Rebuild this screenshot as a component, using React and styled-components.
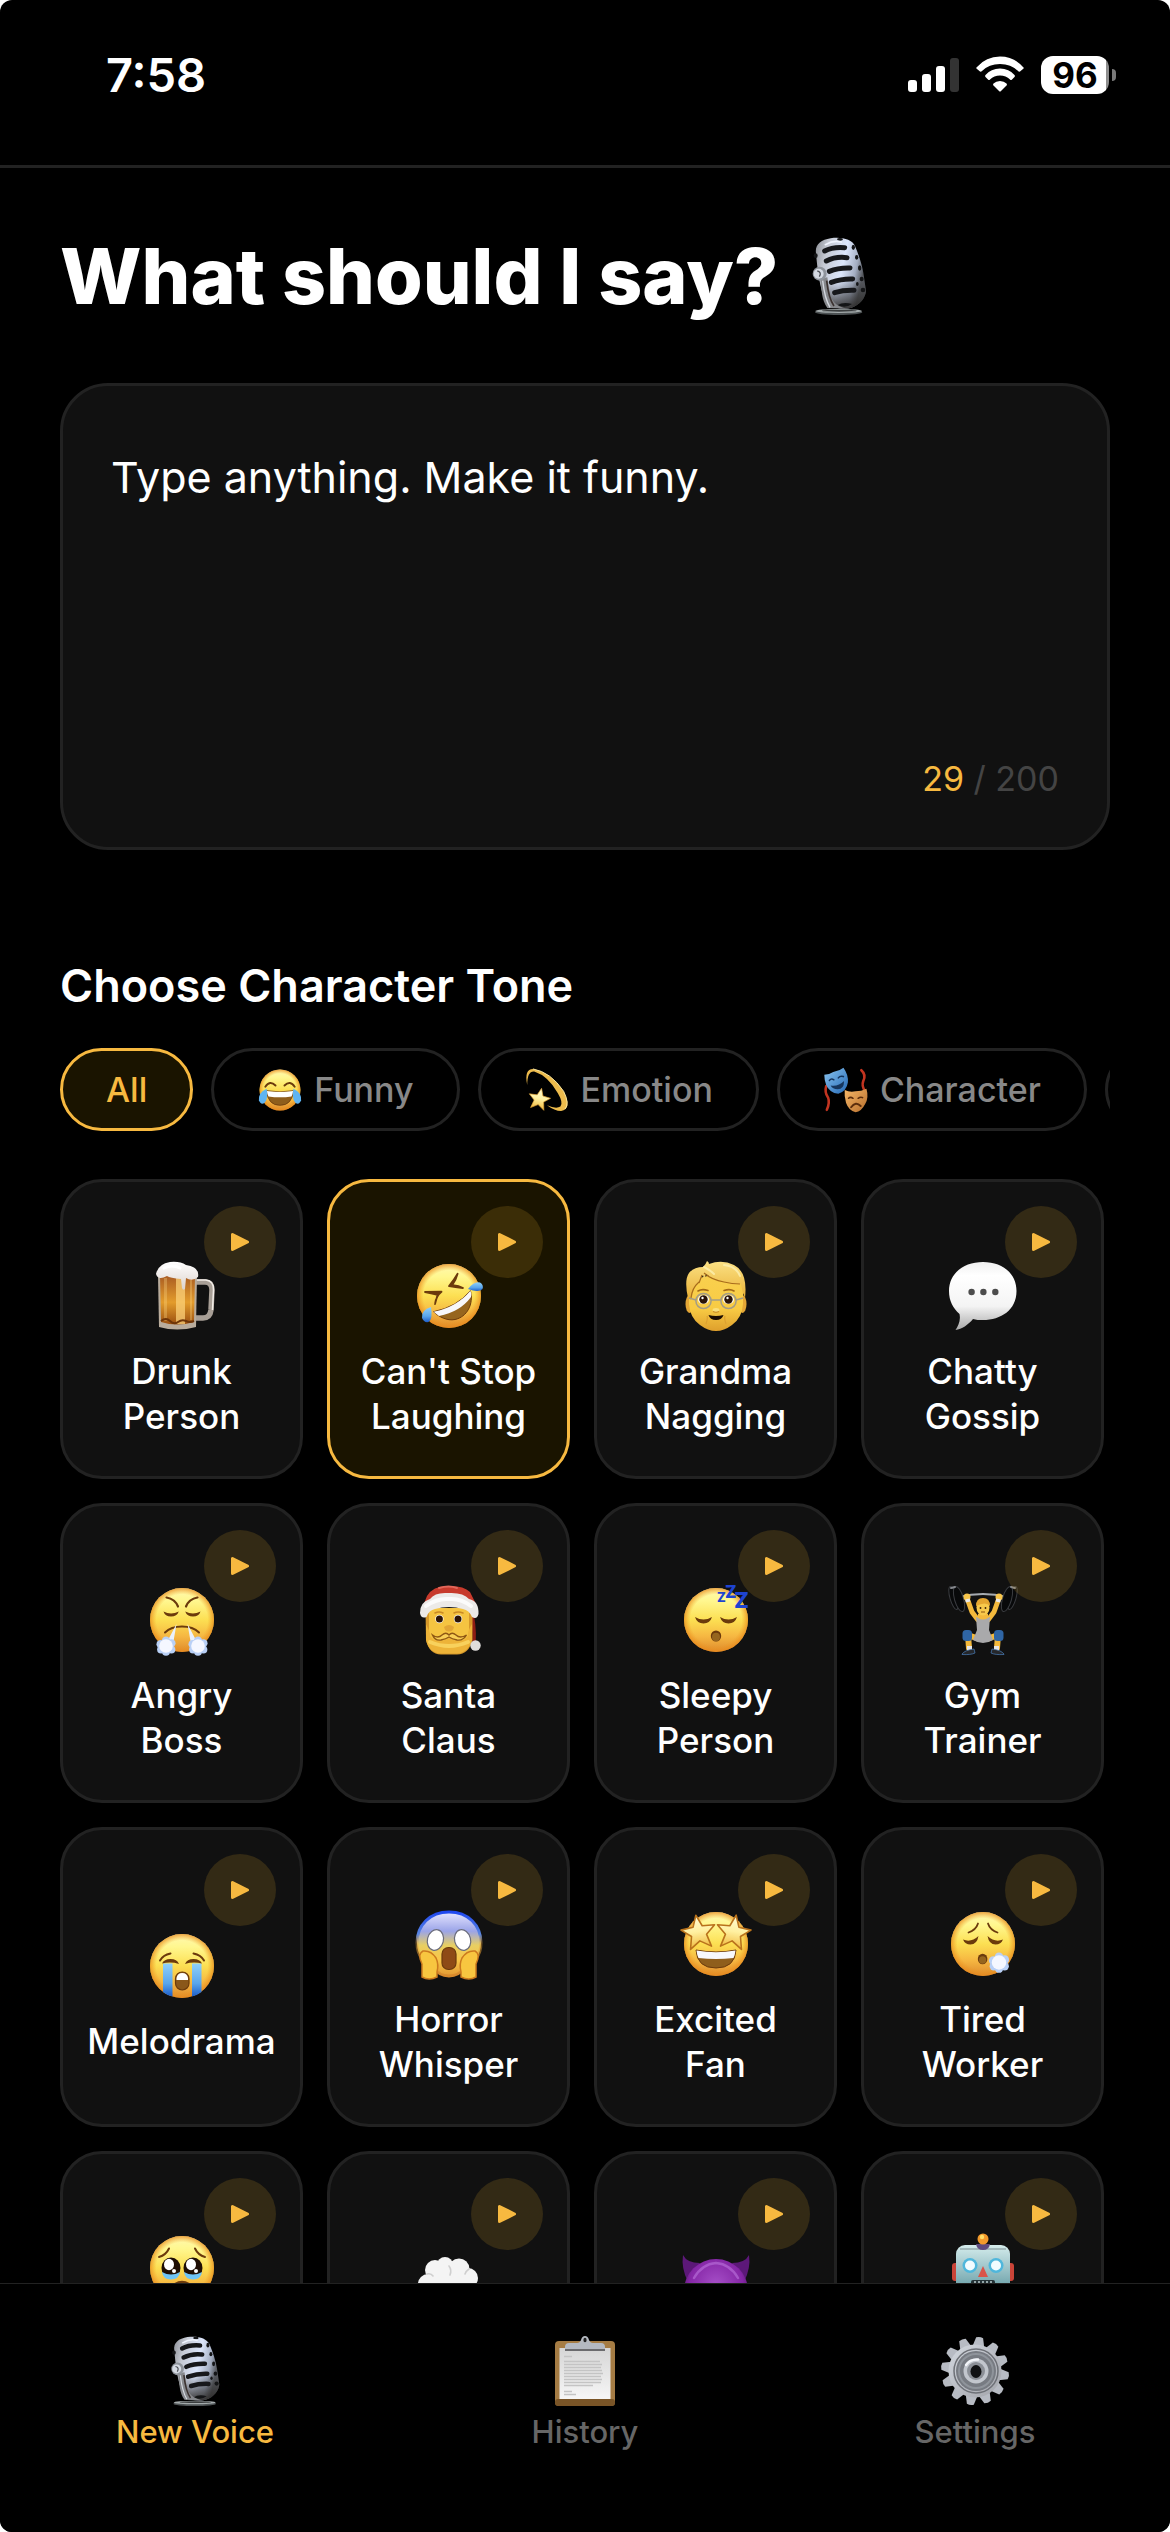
import styled from "styled-components";
import { createGlobalStyle } from "styled-components";
import React from "react";


const Global = createGlobalStyle`
*{
  box-sizing: border-box;
  font-family: 'Inter', sans-serif;
}
html{
  background: #FFFFFF;
}
body{
  margin: 0;
}
button, textarea{
  margin: 0;
  padding: 0;
  border: none;
  background: none;
  color: inherit;
}
`

const Page = styled.div`
height: 100vh;
display: flex;
flex-direction: column;
overflow: hidden;
background: #000000;
color: #FFFFFF;
border-radius: 12px;
`

const StatusBar = styled.header`
display: flex;
align-items: center;
justify-content: space-between;
padding: 45px 54px 60px 106px;
border-bottom: 3px solid #222222;
`
const Time = styled.span`
font-size: 47px;
line-height: 60px;
font-weight: 600;
`
const StatusIcons = styled.div`
display: flex;
align-items: center;
gap: 17px;
`
const Battery = styled.div`
display: flex;
align-items: center;
gap: 3px;
`
const BatteryBody = styled.span`
width: 68px;
border-radius: 12px;
background: linear-gradient(90deg, #FFFFFF 96%, #8E8E8E 96%);
color: #000000;
font-size: 35px;
line-height: 38px;
font-weight: 700;
text-align: center;
`
const BatteryTip = styled.span`
width: 4px;
height: 12px;
border-radius: 0 4px 4px 0;
background: #7A7A7A;
`

const Main = styled.main`
flex: 1;
min-height: 0;
overflow-y: auto;
padding: 60px 60px 48px;
scrollbar-width: none;
`
const Title = styled.h1`
display: flex;
align-items: center;
gap: 21px;
margin: 0 0 59px;
font-size: 77px;
line-height: 96px;
font-weight: 800;
`
const TextCard = styled.div`
display: flex;
flex-direction: column;
padding: 48px;
border: 3px solid #222222;
border-radius: 48px;
background: #111111;
`
const TextInput = styled.textarea`
display: block;
width: 100%;
height: 325px;
padding-top: 10px;
font-size: 43px;
line-height: 66px;
resize: none;
&:focus{
  outline: none;
}
`
const Counter = styled.div`
align-self: flex-end;
font-size: 34px;
line-height: 40px;
color: #444444;
`
const CounterValue = styled.span`
color: #F7B940;
`

const SectionTitle = styled.h2`
margin: 109px 0 35px;
font-size: 45px;
line-height: 54px;
font-weight: 600;
`
const Chips = styled.div`
display: flex;
gap: 18px;
margin-bottom: 48px;
overflow-x: auto;
scrollbar-width: none;
`
const Chip = styled.button`
flex: none;
display: flex;
align-items: center;
gap: 11px;
height: 83px;
padding: 0 43px;
border: 3px solid ${props => props.$active ? '#F7B940' : '#222222'};
border-radius: 42px;
background: ${props => props.$active ? '#1A1400' : '#000000'};
color: ${props => props.$active ? '#F7B940' : '#888888'};
font-size: 34px;
line-height: 45px;
font-weight: 500;
`

const Grid = styled.div`
display: grid;
grid-template-columns: repeat(4, 1fr);
gap: 24px;
padding-right: 6px;
`
const Card = styled.div`
position: relative;
height: 300px;
border: 3px solid ${props => props.$active ? '#F7B940' : '#222222'};
border-radius: 42px;
background: ${props => props.$active ? '#1A1400' : '#111111'};
`
const CardSelect = styled.button`
width: 100%;
height: 100%;
display: flex;
flex-direction: column;
align-items: center;
justify-content: center;
gap: 17px;
padding: 40px 12px 0;
border-radius: 39px;
font-size: 35px;
line-height: 45px;
font-weight: 500;
`
const CardLabel = styled.span`
white-space: pre-line;
text-align: center;
`
const PlayButton = styled.button`
position: absolute;
top: 24px;
right: 24px;
width: 72px;
height: 72px;
display: flex;
align-items: center;
justify-content: center;
border-radius: 50%;
background: rgba(247, 190, 48, 0.15);
`

const TabBar = styled.nav`
display: grid;
grid-template-columns: repeat(3, 1fr);
padding: 51px 0 81px;
border-top: 1px solid #222222;
background: #000000;
`
const Tab = styled.button`
display: flex;
flex-direction: column;
align-items: center;
gap: 6px;
color: ${props => props.$active ? '#F7B940' : '#666666'};
font-size: 31px;
line-height: 38px;
font-weight: 500;
`

const EmojiSvg = styled.svg`
flex: none;
display: block;
width: ${props => props.$size}px;
height: ${props => props.$size}px;
overflow: visible;
`
const SharedDefs = styled.svg`
position: absolute;
width: 0;
height: 0;
`


//gradients used by all the emoji;
function Defs() {
  return (
    <SharedDefs aria-hidden="true">
      <defs>
        <linearGradient id="face" x1="0" y1="0" x2="0" y2="1">
          <stop offset="0" stopColor="#FFF8B0" />
          <stop offset="0.2" stopColor="#FFF78F" />
          <stop offset="0.5" stopColor="#FCDF52" />
          <stop offset="0.75" stopColor="#F6B842" />
          <stop offset="1" stopColor="#DE8A2C" />
        </linearGradient>
        <radialGradient id="edge">
          <stop offset="0.8" stopColor="#F09A20" stopOpacity="0" />
          <stop offset="1" stopColor="#E8891C" stopOpacity="0.75" />
        </radialGradient>
        <linearGradient id="fear" x1="0" y1="0" x2="0" y2="1">
          <stop offset="0" stopColor="#E6E6FF" />
          <stop offset="0.3" stopColor="#9BA4E8" />
          <stop offset="0.52" stopColor="#E8CF62" />
          <stop offset="0.75" stopColor="#F8C548" />
          <stop offset="1" stopColor="#E39A34" />
        </linearGradient>
        <linearGradient id="fearRim" x1="0" y1="0" x2="0" y2="1">
          <stop offset="0" stopColor="#1F48F0" />
          <stop offset="0.35" stopColor="#5A86E0" />
          <stop offset="0.5" stopColor="#E9A537" stopOpacity="0.4" />
          <stop offset="1" stopColor="#D98A2C" />
        </linearGradient>
        <linearGradient id="tear" x1="0" y1="0" x2="0" y2="1">
          <stop offset="0" stopColor="#8FD0FA" />
          <stop offset="0.6" stopColor="#5AA6EC" />
          <stop offset="1" stopColor="#1D5DC8" />
        </linearGradient>
        <linearGradient id="skin" x1="0" y1="0" x2="0" y2="1">
          <stop offset="0" stopColor="#F9D04E" />
          <stop offset="0.6" stopColor="#F8CB44" />
          <stop offset="1" stopColor="#DE9F2C" />
        </linearGradient>
        <linearGradient id="hair" x1="0" y1="0" x2="0" y2="1">
          <stop offset="0" stopColor="#FBE184" />
          <stop offset="1" stopColor="#E9AF33" />
        </linearGradient>
        <linearGradient id="beer" x1="0" y1="0" x2="0" y2="1">
          <stop offset="0" stopColor="#A85A22" />
          <stop offset="0.55" stopColor="#E39C2C" />
          <stop offset="1" stopColor="#9A4F10" />
        </linearGradient>
        <linearGradient id="foam" x1="0" y1="0" x2="0" y2="1">
          <stop offset="0" stopColor="#FFFFFF" />
          <stop offset="1" stopColor="#DCD2CC" />
        </linearGradient>
        <linearGradient id="bubble" x1="0" y1="0" x2="0" y2="1">
          <stop offset="0" stopColor="#F0F0F0" />
          <stop offset="0.2" stopColor="#FFFFFF" />
          <stop offset="0.65" stopColor="#F4F4F4" />
          <stop offset="1" stopColor="#A9A9A9" />
        </linearGradient>
        <linearGradient id="starFill" x1="0" y1="0" x2="0" y2="1">
          <stop offset="0" stopColor="#FFFBD8" />
          <stop offset="0.5" stopColor="#FFF0A0" />
          <stop offset="1" stopColor="#F0B93E" />
        </linearGradient>
        <linearGradient id="steel" x1="0" y1="0" x2="1" y2="0.3">
          <stop offset="0" stopColor="#8A8D94" />
          <stop offset="0.25" stopColor="#C6CAD4" />
          <stop offset="0.6" stopColor="#DCE6FC" />
          <stop offset="0.85" stopColor="#A4AEC2" />
          <stop offset="1" stopColor="#55585E" />
        </linearGradient>
        <linearGradient id="micShade" x1="0" y1="0" x2="0" y2="1">
          <stop offset="0.6" stopColor="#2A2826" stopOpacity="0" />
          <stop offset="1" stopColor="#2A2826" stopOpacity="0.9" />
        </linearGradient>
        <linearGradient id="gearFill" x1="0" y1="0" x2="1" y2="1">
          <stop offset="0" stopColor="#D3D8DF" />
          <stop offset="1" stopColor="#A2A4AA" />
        </linearGradient>
        <linearGradient id="paper" x1="0" y1="0" x2="0" y2="1">
          <stop offset="0" stopColor="#D6D6D6" />
          <stop offset="1" stopColor="#F6F6F6" />
        </linearGradient>
        <radialGradient id="devil" cx="0.5" cy="0.4" r="0.6">
          <stop offset="0" stopColor="#A64FC8" />
          <stop offset="0.7" stopColor="#8526A6" />
          <stop offset="1" stopColor="#4A1060" />
        </radialGradient>
        <linearGradient id="robot" x1="0" y1="0" x2="0" y2="1">
          <stop offset="0" stopColor="#D5ECEC" />
          <stop offset="1" stopColor="#4F8D98" />
        </linearGradient>
        <linearGradient id="blueMask" x1="0" y1="0" x2="1" y2="1">
          <stop offset="0" stopColor="#8CC7F2" />
          <stop offset="1" stopColor="#2367B4" />
        </linearGradient>
        <linearGradient id="goldMask" x1="0" y1="0" x2="1" y2="1">
          <stop offset="0" stopColor="#F7B868" />
          <stop offset="1" stopColor="#B56D2C" />
        </linearGradient>
      </defs>
    </SharedDefs>
  )
}

const BROWN = '#6B3A0C';

function Face() {
  return (
    <>
      <circle cx="36" cy="36" r="32" fill="url(#face)" />
      <circle cx="36" cy="36" r="32" fill="url(#edge)" />
    </>
  )
}

function Lines({ d, w = 2.6, color = BROWN }) {
  return <path d={d} fill="none" stroke={color} strokeWidth={w} strokeLinecap="round" strokeLinejoin="round" />
}

function Puff({ x, y, r }) {
  return (
    <g transform={`translate(${x} ${y}) scale(${r / 10})`}>
      <g fill="#B9D0F6">
        <circle cx="-6" cy="-2" r="4.6" /><circle cx="0" cy="-6" r="4.6" /><circle cx="6" cy="-3" r="4.6" />
        <circle cx="6" cy="4" r="4.4" /><circle cx="0" cy="6.5" r="4.4" /><circle cx="-5.5" cy="4" r="4.4" />
      </g>
      <circle r="7.6" fill="#F5F7FF" />
    </g>
  )
}

const STAR = 'M0 -17 L4.6 -5.6 L17 -4.6 L7.6 3.4 L10.6 16 L0 9 L-10.6 16 L-7.6 3.4 L-17 -4.6 L-4.6 -5.6 Z';

const emojis = {
  mic: (
    <>
      <ellipse cx="132" cy="261" rx="71" ry="8" fill="#4D5254" />
      <ellipse cx="132" cy="257" rx="70" ry="6" fill="#A3AAAB" />
      <ellipse cx="134" cy="256" rx="52" ry="3" fill="#3A3D3E" />
      <path d="M64 84 C60 58 78 44 108 39 C140 34 172 42 181 62 C193 90 202 118 206 142 L214 196 C214 214 196 240 168 248 C136 254 104 246 92 228 C74 182 68 130 64 84Z" fill="url(#steel)" />
      <path d="M64 84 C60 58 78 44 108 39 C140 34 172 42 181 62 C193 90 202 118 206 142 L214 196 C214 214 196 240 168 248 C136 254 104 246 92 228 C74 182 68 130 64 84Z" fill="url(#micShade)" />
      <g fill="none" stroke="#17181B" strokeWidth="15" strokeLinecap="round">
        <path d="M90 77 Q114 64 150 67" />
        <path d="M95 107 Q122 93 157 97" />
        <path d="M104 138 Q130 127 166 128" />
        <path d="M110 171 Q140 160 174 161" />
        <path d="M120 202 Q146 194 178 195" />
      </g>
      <g fill="#141517">
        <ellipse cx="136" cy="42" rx="9" ry="4" />
        <ellipse cx="63" cy="91" rx="6" ry="7" />
        <ellipse cx="176" cy="66" rx="5" ry="8" />
        <ellipse cx="186" cy="96" rx="5" ry="7" />
        <ellipse cx="195" cy="128" rx="5" ry="8" />
        <ellipse cx="201" cy="161" rx="6" ry="7" />
        <ellipse cx="205" cy="194" rx="7" ry="7" />
        <ellipse cx="188" cy="176" rx="4" ry="6" />
        <path d="M128 240 Q146 228 172 236 Q154 250 128 240Z" />
      </g>
      <path d="M76 160 C82 196 80 222 98 248 L168 250 C124 248 108 224 104 196 L98 156Z" fill="#85878B" />
      <path d="M84 166 Q90 220 106 246" fill="none" stroke="#D5D9E0" strokeWidth="4" />
      <path d="M96 166 Q102 220 118 242" fill="none" stroke="#3B3230" strokeWidth="5" />
      <circle cx="75" cy="145" r="21" fill="#8F949C" />
      <circle cx="72" cy="145" r="15" fill="#D4D9E2" />
      <path d="M68 137 Q82 140 74 154" fill="none" stroke="#4A4D54" strokeWidth="4" />
      <path d="M92 58 Q116 44 140 50" fill="none" stroke="#F1F5FF" strokeWidth="5" strokeLinecap="round" />
    </>
  ),
  beer: (
    <>
      <path d="M50 22 H59 Q66 22 66 30 L65 50 Q64 58 57 58 H50" fill="none" stroke="#A89F96" strokeWidth="5.5" />
      <path d="M50 20 H60 Q68 21 67.500 30 L66.500 50" fill="none" stroke="#F3EEE8" strokeWidth="1.500" />
      <path d="M12 15 H51 L50 67 Q31 72 13 67Z" fill="#B9AC9C" />
      <path d="M14 15 H49 L48 62 Q31 67 15 62Z" fill="url(#beer)" />
      <path d="M30 16 H39 V64 H30Z" fill="#FBD078" opacity="0.75" />
      <path d="M18 18 H21 V61 H18Z M44 20 H46 V60 H44Z" fill="#FFDF8E" opacity="0.3" />
      <path d="M15 61 Q20 57 24 61 T32 62 T40 61 T48 61" fill="none" stroke="#6E3508" strokeWidth="2" />
      <path d="M10 14 Q12 4 24 2 Q34 1 40 5 Q54 7 52 17 Q46 22 40 18 L39 29 Q37 31 36 28 L35 19 Q24 18 21 16 Q12 21 10 14Z" fill="url(#foam)" />
      <path d="M18 8 Q26 4 34 8" fill="none" stroke="#FFFFFF" strokeWidth="3" strokeLinecap="round" />
    </>
  ),
  rofl: (
    <>
      <Face />
      <path d="M12 32 L28.500 31.700 Q23 36 22 44 L24.500 35 Q18 33 12 32Z" fill={BROWN} stroke={BROWN} strokeWidth="1.800" strokeLinejoin="round" />
      <path d="M44.600 13.700 Q41 20 36 26 Q42 27 50 28 Q44 24.500 39 25.500 Q43 20 44.600 13.700Z" fill={BROWN} stroke={BROWN} strokeWidth="1.800" strokeLinejoin="round" />
      <path d="M20.600 51.700 Q44 47 57.400 30.700 C61 44 54 57 42 59.500 C34 61 26 57 20.600 51.700Z" fill="#96651E" stroke="#6B3A0C" strokeWidth="1" />
      <path d="M20.600 51.700 Q44 47 57.400 30.700 Q59 34 58 37 Q47 52 26 56Z" fill="#F7F7FB" />
      <path d="M55 29 Q61 21 67 22.500 Q71 25 69.500 29 Q66 33 55 29Z" fill="url(#tear)" />
      <path d="M18 47 Q8 50 9 58 Q11 63 15.500 62 Q20 59 18 47Z" fill="url(#tear)" />
    </>
  ),
  grandma: (
    <>
      <ellipse cx="9.500" cy="44" rx="4" ry="9" fill="#E3A636" />
      <ellipse cx="62.500" cy="44" rx="4" ry="9" fill="#E3A636" />
      <path d="M9 24 Q36 6 63 24 V44 Q62 58 52 65 Q44 71 36 71 Q28 71 20 65 Q10 58 9 44Z" fill="url(#skin)" />
      <path d="M8 38 Q4 20 9 13 Q14 7 23 7 Q26 4 27 1 Q29 2 29 4 Q42 -1 54 5 Q68 12 65 38 Q62 32 61 24 Q52 24 46 22 Q34 20 26 14 L24 20 L23 15 L19 22 Q12 28 11 40Z" fill="url(#hair)" />
      <path d="M24 13 Q32 20 44 22 Q52 24 60 24 M22 15 L19 23 M11 38 Q12 28 19 22" fill="none" stroke="#A86C1C" strokeWidth="1.200" />
      <path d="M24 7 Q30 10 34 14 M44 5 Q56 6 60 16" fill="none" stroke="#FDF0B0" strokeWidth="2" strokeLinecap="round" opacity="0.8" />
      <Lines d="M18 31 Q22 28.500 28 30.500 M44 30.500 Q50 28.500 54 31" w={1.6} color="#A36A18" />
      <ellipse cx="23.500" cy="39.500" rx="5.500" ry="4.600" fill="#FFFFFF" />
      <ellipse cx="48.500" cy="39.500" rx="5.500" ry="4.600" fill="#FFFFFF" />
      <circle cx="23.500" cy="39.500" r="4.200" fill="#2A1408" />
      <circle cx="48.500" cy="39.500" r="4.200" fill="#2A1408" />
      <circle cx="22.500" cy="38" r="1.200" fill="#FFFFFF" />
      <circle cx="47.500" cy="38" r="1.200" fill="#FFFFFF" />
      <g fill="none" stroke="#A39C86" strokeWidth="1.500">
        <circle cx="23.500" cy="41" r="7.600" />
        <circle cx="48.500" cy="41" r="7.600" />
        <path d="M31 40 H41 M16 40 L9 38 M56 40 L63 38" />
      </g>
      <ellipse cx="36" cy="50" rx="3.500" ry="2" fill="#FBE07C" />
      <path d="M33 51.500 Q36 53 39 51.500" fill="none" stroke="#C98A25" strokeWidth="1.200" />
      <path d="M28.500 55 Q36 57 43.500 55 Q42 60 36 60 Q30 60 28.500 55Z" fill="#1C0D02" />
      <path d="M26 64 Q28 58 27 56 M46 64 Q44 58 45 56" fill="none" stroke="#DDA031" strokeWidth="1.200" />
    </>
  ),
  chat: (
    <>
      <path d="M36 2 C55 2 69.500 13 69.500 31 C69.500 50 54 60 36 60 C32 60 29 60 26 59 C21 65 15 69 8.500 70 C11 66 14 61 12.500 54 C6 48 2 41 2 31 C2 13 17 2 36 2Z" fill="url(#bubble)" />
      <circle cx="24.600" cy="32" r="3.200" fill="#4C4C4C" />
      <circle cx="36.400" cy="32" r="3.200" fill="#4C4C4C" />
      <circle cx="48.300" cy="32" r="3.200" fill="#4C4C4C" />
    </>
  ),
  angry: (
    <>
      <Face />
      <Lines d="M20.500 13.500 Q29 15 32 22.500 M51.500 13.500 Q43 15 40 22.500" w={2.2} />
      <path d="M17.500 27.500 Q25 31.500 32.800 27.500 Q31 32.500 25 32.500 Q19 32.500 17.500 27.500Z M39.200 27.500 Q47 31.500 54.500 27.500 Q53 32.500 47 32.500 Q41 32.500 39.200 27.500Z" fill={BROWN} />
      <Lines d="M19 48.500 Q25 42.500 36 42.500 Q47 42.500 53 48.500" w={2} />
      <path d="M30.500 40 L21 58 L27 60Z M41.500 40 L51 58 L45 60Z" fill="#EAF1FC" />
      <Puff x={20} y={62} r={9} />
      <Puff x={52} y={62} r={9} />
    </>
  ),
  santa: (
    <>
      <path d="M57 22 Q62 40 61 58" fill="none" stroke="#8E1D14" strokeWidth="3.500" />
      <path d="M12.500 26 H59.500 V56 Q56 70 44 70.500 H28 Q16 70 13 56Z" fill="#D6982A" />
      <path d="M16 24 H56 V50 Q54 60 36 60 Q18 60 16 50Z" fill="#F5C441" />
      <path d="M13 40 Q18 50 17 52 L21 56 Q28 57 36 52 Q44 57 51 56 L55 52 Q54 48 59 40 V56 Q55 69 44 69.500 H28 Q16 69 13 56Z" fill="#EDB338" />
      <path d="M17 58 Q36 66 55 58" fill="none" stroke="#F8D15C" strokeWidth="4" strokeLinecap="round" />
      <path d="M14 12 Q20 2 34 2 Q50 1 57 8 L64 22 L10 22Z" fill="#C73A2C" />
      <path d="M26 4 Q36 1 44 4" fill="none" stroke="#E2685B" strokeWidth="2" strokeLinecap="round" />
      <path d="M7 29 Q7 18 17 15 Q22 8 35 9 Q50 8 56 15 Q66 17 65.500 30 Q64 36 59 33 Q56 26 50 25 Q36 21 22 25 Q16 26 13.500 33 Q8 35 7 29Z" fill="#ECEAE8" />
      <path d="M13 22 Q24 14 36 15 Q48 14 58 22" fill="none" stroke="#FFFFFF" strokeWidth="4" strokeLinecap="round" opacity="0.8" />
      <circle cx="26.400" cy="35" r="4.200" fill="#FFFFFF" />
      <circle cx="45" cy="35" r="4.200" fill="#FFFFFF" />
      <circle cx="26.400" cy="35" r="3.500" fill="#2A1408" />
      <circle cx="45" cy="35" r="3.500" fill="#2A1408" />
      <Lines d="M22 29 Q26 27 30 29 M41 29 Q45 27 50 29" w={1.6} color="#C98A25" />
      <path d="M31 43 Q36 39 41 43 Q40 47.500 36 47.500 Q32 47.500 31 43Z" fill="#E2A636" />
      <path d="M19.500 51 Q25 55 29 51 Q33 47.500 36 51 Q39 47.500 43 51 Q47 55 53.500 51 Q50 57 44 56 Q39 55 36 53 Q33 55 28 56 Q22 57 19.500 51Z" fill="#F8CF56" stroke="#8F5814" strokeWidth="1.400" />
      <circle cx="62.500" cy="61.500" r="5.200" fill="#DFDDDB" />
    </>
  ),
  sleepy: (
    <>
      <Face />
      <path d="M15 33 Q23.500 38 32 33 Q30 39.500 23.500 39.500 Q17 39.500 15 33Z M40 33 Q48.500 38 57 33 Q55 39.500 48.500 39.500 Q42 39.500 40 33Z" fill={BROWN} />
      <ellipse cx="36" cy="52" rx="5.200" ry="5.500" fill={BROWN} />
      <ellipse cx="36" cy="53" rx="4" ry="4.200" fill="#96651E" />
      <g fill="#1E43D0" fontWeight="800">
        <text x="37" y="18" fontSize="13">Z</text>
        <text x="45" y="14" fontSize="17">Z</text>
        <text x="54" y="24" fontSize="22">Z</text>
      </g>
    </>
  ),
  gym: (
    <>
      <path d="M12 13 Q36 7 60 13" fill="none" stroke="#A6ABB0" strokeWidth="2" />
      <g fill="#08090A" stroke="#3A3C40" strokeWidth="1">
        <ellipse cx="6.500" cy="14" rx="3.500" ry="12" transform="rotate(-16 6.500 14)" />
        <ellipse cx="12" cy="15" rx="4.500" ry="13" transform="rotate(-16 12 15)" />
        <ellipse cx="65.500" cy="14" rx="3.500" ry="12" transform="rotate(16 65.500 14)" />
        <ellipse cx="60" cy="15" rx="4.500" ry="13" transform="rotate(16 60 15)" />
      </g>
      <path d="M4 4 L8 3 M68 4 L64 3" stroke="#85888D" strokeWidth="2" strokeLinecap="round" />
      <Lines d="M20 14 L25 28 L31 36 M52 14 L47 28 L41 36" w={5} color="#F3B93C" />
      <circle cx="20" cy="13" r="3.500" fill="#F7C54A" />
      <circle cx="52" cy="13" r="3.500" fill="#F7C54A" />
      <path d="M18.500 17 L23 16 M49 16 L53.500 17" stroke="#E9E9E9" strokeWidth="3" />
      <Lines d="M32 55 L21 51 L22 64 M40 55 L51 51 L50 64" w={6} color="#F3B93C" />
      <path d="M29 33 Q36 36 43 33 L42 46 L46 56 Q36 62 26 56 L30 46Z" fill="#A9A9AB" />
      <path d="M31 34 L31 30 H41 L41 34 Q36 37 31 34Z" fill="#F3B93C" />
      <ellipse cx="36" cy="23.500" rx="6.500" ry="8" fill="#F7C94C" />
      <path d="M29 22 Q29 14 36 14 Q43 14 43 22 Q39 17 29 22Z" fill="#E5A731" />
      <circle cx="33.500" cy="24" r="0.900" fill="#3A2008" />
      <circle cx="38.500" cy="24" r="0.900" fill="#3A2008" />
      <path d="M34 28 H38" stroke="#8A5310" strokeWidth="1" />
      <rect x="15.500" y="46" width="9.500" height="11" rx="3.500" fill="#2F65A4" />
      <rect x="47" y="46" width="9.500" height="11" rx="3.500" fill="#2F65A4" />
      <path d="M20 62 H25 V66 H20Z M47 62 H52 V66 H47Z" fill="#E6E6E6" />
      <path d="M15 70 Q18 66 27 65 L28 69 Q24 71 15 70.500Z M57 70 Q54 66 45 65 L44 69 Q48 71 57 70.500Z" fill="#25272B" stroke="#4A80BC" strokeWidth="0.700" />
    </>
  ),
  crying: (
    <>
      <Face />
      <Lines d="M14 30.500 Q17 25 24.500 23.500 M58 30.500 Q55 25 47.500 23.500" w={2} />
      <path d="M17 33.500 V62 Q21 65.500 26.500 66.500 V33.500Z M46 33.500 V66.500 Q51 65.500 55.500 62 V33.500Z" fill="url(#tear)" />
      <path d="M16 33.500 Q18 29 24.500 29 Q31 29 33 34 Q25 31.500 16 33.500Z M56 33.500 Q54 29 47.500 29 Q41 29 39 34 Q47 31.500 56 33.500Z" fill={BROWN} />
      <rect x="29.500" y="42" width="13.500" height="18" rx="6.700" fill="#8A571A" stroke={BROWN} strokeWidth="1.200" />
      <path d="M30.500 50 V48 Q31.500 43 36.200 43 Q41 43 42 48 V50Z" fill="#FFFFFF" />
    </>
  ),
  scream: (
    <>
      <path d="M36 4 C55 4 68 17 68 35 C68 48 60 56 52 59 Q46 68 36 68 Q26 68 20 59 C12 56 4 48 4 35 C4 17 17 4 36 4Z" fill="url(#fear)" stroke="url(#fearRim)" strokeWidth="3" />
      <ellipse cx="22.400" cy="32" rx="8" ry="10.500" fill="#FFFFFF" stroke="#6A6C7C" strokeWidth="1.200" transform="rotate(14 22.400 32)" />
      <ellipse cx="49.600" cy="32" rx="8" ry="10.500" fill="#FFFFFF" stroke="#6A6C7C" strokeWidth="1.200" transform="rotate(-14 49.600 32)" />
      <rect x="29" y="39.500" width="14" height="22" rx="6.500" fill="#8E4A16" stroke={BROWN} strokeWidth="1.200" />
      <path d="M9 69 V56 Q4 46 10 43 Q18 42 23 50 Q26 56 24 64 L24 69 Q16 73 9 69Z" fill="#F8C640" stroke="#CC7A1E" strokeWidth="1.500" />
      <path d="M63 69 V56 Q68 46 62 43 Q54 42 49 50 Q46 56 48 64 L48 69 Q56 73 63 69Z" fill="#F8C640" stroke="#CC7A1E" strokeWidth="1.500" />
    </>
  ),
  excited: (
    <>
      <Face />
      <path d="M16 42 Q36 46 56 42 Q55 60 36 60 Q17 60 16 42Z" fill="#8F5E1C" stroke="#6B3A0C" strokeWidth="1" />
      <path d="M16.500 42.500 Q36 46 55.500 42.500 Q55 47 53.500 50 Q36 52 18.500 50 Q17 47 16.500 42.500Z" fill="#F7F8FC" />
      <path d={STAR} transform="translate(18.500 24) rotate(-9)" fill="url(#starFill)" stroke="#B9721C" strokeWidth="1.600" strokeLinejoin="round" />
      <path d={STAR} transform="translate(53.500 24) rotate(9)" fill="url(#starFill)" stroke="#B9721C" strokeWidth="1.600" strokeLinejoin="round" />
    </>
  ),
  tired: (
    <>
      <Face />
      <Lines d="M21.500 24.500 Q29 22 31 15.500 M50.500 24.500 Q43 22 41 15.500" w={1.8} />
      <path d="M16 31.500 Q24 35 31.500 28 Q30 36.500 23.500 36.500 Q18 36.500 16 31.500Z M56 31.500 Q48 35 40.500 28 Q42 36.500 48.500 36.500 Q54 36.500 56 31.500Z" fill={BROWN} />
      <ellipse cx="35.600" cy="51" rx="4.800" ry="5.200" fill={BROWN} />
      <ellipse cx="35.600" cy="52" rx="3.600" ry="3.800" fill="#96651E" />
      <Puff x={52} y={54.5} r={9.5} />
    </>
  ),
  touched: (
    <>
      <Face />
      <Lines d="M13 25 Q20 23 23 16.500 M59 25 Q52 23 49 16.500" w={2} />
      <ellipse cx="25" cy="36" rx="9.500" ry="10.500" fill="#1E0E04" />
      <ellipse cx="47" cy="36" rx="9.500" ry="10.500" fill="#1E0E04" />
      <ellipse cx="23" cy="32.500" rx="5" ry="5.800" fill="#FFFFFF" />
      <ellipse cx="45" cy="32.500" rx="5" ry="5.800" fill="#FFFFFF" />
      <circle cx="28" cy="39" r="2" fill="#FFFFFF" />
      <circle cx="50" cy="39" r="2" fill="#FFFFFF" />
      <path d="M16 40 Q25 45 34 40 Q33 47.500 25 47.500 Q17 47.500 16 40Z M38 40 Q47 45 56 40 Q55 47.500 47 47.500 Q39 47.500 38 40Z" fill="#6FC4F5" />
      <Lines d="M28 53 Q36 47 44 53" />
    </>
  ),
  cloud: (
    <>
      <g fill="#F4F4F4">
        <circle cx="32" cy="11" r="8" /><circle cx="22" cy="16" r="10" /><circle cx="46" cy="15" r="10.500" />
        <circle cx="55" cy="24" r="10" /><circle cx="15" cy="30" r="10" /><circle cx="36" cy="30" r="20" />
        <circle cx="24" cy="42" r="12" /><circle cx="48" cy="42" r="12" />
      </g>
      <path d="M36 12 Q39 16 37 21 M14 20 Q18 19 20 22 M56 15 Q53 17 52 20" fill="none" stroke="#CFCFCF" strokeWidth="1.600" strokeLinecap="round" />
      <circle cx="14" cy="60" r="5" fill="#E4E4E4" />
      <circle cx="7" cy="67" r="3" fill="#E4E4E4" />
    </>
  ),
  devil: (
    <>
      <path d="M3 1 Q7 9 20 9 L8 28 Q1 14 3 1Z M69 1 Q65 9 52 9 L64 28 Q71 14 69 1Z" fill="#5C1878" />
      <circle cx="36" cy="37" r="32" fill="url(#devil)" />
      <path d="M14 24 Q22 10 36 9 Q50 10 58 24" fill="none" stroke="#B56AD6" strokeWidth="2.500" strokeLinecap="round" opacity="0.7" />
      <Lines d="M18 33 L30 40 M54 33 L42 40 M20 50 Q36 62 52 50" w={3} color="#2E0840" />
    </>
  ),
  robot: (
    <>
      <rect x="5" y="31" width="8" height="18" rx="3" fill="#C94438" />
      <rect x="59" y="31" width="8" height="18" rx="3" fill="#C94438" />
      <rect x="9" y="13" width="54" height="55" rx="9" fill="url(#robot)" />
      <path d="M13 17 H59" stroke="#A3B9BB" strokeWidth="2" />
      <path d="M29 12 H43 Q42 18 36 18 Q30 18 29 12Z" fill="#5F4A7E" />
      <circle cx="36" cy="7" r="5.500" fill="#F39A2C" />
      <circle cx="35" cy="5" r="2.200" fill="#FFDD66" />
      <circle cx="23" cy="33.500" r="7.500" fill="#4FB7DC" />
      <circle cx="49" cy="33.500" r="7.500" fill="#4FB7DC" />
      <circle cx="23" cy="33.500" r="5" fill="#F2FCFF" />
      <circle cx="49" cy="33.500" r="5" fill="#F2FCFF" />
      <path d="M36 34 L41 45 H31Z" fill="#D9544A" />
      <rect x="24" y="48" width="24" height="9" rx="2" fill="#243236" />
      <path d="M28 49 V56 M32 49 V56 M36 49 V56 M40 49 V56 M44 49 V56" stroke="#B9CDD0" strokeWidth="1.500" />
    </>
  ),
  joy: (
    <>
      <Face />
      <Lines d="M13 31 Q20 20 29 29 M43 29 Q52 20 59 31" w={3} />
      <path d="M15 37 Q36 41 57 37 Q55 60 36 60 Q17 60 15 37Z" fill="#8F5E1C" stroke={BROWN} strokeWidth="1.200" />
      <path d="M15.500 37.500 Q36 41 56.500 37.500 Q56 43 54 46 Q36 49 18 46 Q16 43 15.500 37.500Z" fill="#FFFFFF" />
      <path d="M15 34 Q2 40 3 52 Q6 60 12 56 Q18 50 15 34Z" fill="#5FB4F2" />
      <path d="M57 34 Q70 40 69 52 Q66 60 60 56 Q54 50 57 34Z" fill="#5FB4F2" />
    </>
  ),
  dizzy: (
    <>
      <path d="M5 28 Q0 3 14 3 Q42 8 62 38 Q76 66 58 69 Q48 69 36 60 Q50 66 57 62 Q62 56 53 41 Q38 14 16 7 Q5 6 5 28Z" fill="#EDBB4C" />
      <path d="M14 3 Q42 8 62 38 Q72 58 64 66" fill="none" stroke="#FBE9A4" strokeWidth="1.500" />
      <path d={STAR} transform="translate(24 50) rotate(12)" fill="url(#starFill)" stroke="#DDA033" strokeWidth="1" strokeLinejoin="round" />
    </>
  ),
  masks: (
    <>
      <Lines d="M5 30 Q2 40 8 48 Q11 56 6 67 M60 5 Q68 12 63 22 Q60 30 66 38" w={4} color="#C23420" />
      <path d="M2 12 Q10 12 16 8 Q26 6 32 1 Q40 12 39 24 Q37 38 24 42 Q10 40 5 28 Q2 20 2 12Z" fill="url(#blueMask)" />
      <Lines d="M10 21 Q13 17 17 20 M24 17 Q27 13 32 15" w={2.4} color="#14345C" />
      <path d="M12 29 Q24 31 33 22 Q33 35 23 35 Q15 35 12 29Z" fill="#16365E" />
      <path d="M34 36 Q42 40 51 38 Q60 38 68 34 Q72 48 66 58 Q60 70 51 71 Q40 68 36 56 Q33 46 34 36Z" fill="url(#goldMask)" />
      <Lines d="M40 49 Q43 46 47 49 M55 49 Q59 46 62 48" w={2.4} color="#5A2C0C" />
      <Lines d="M44 63 Q51 53 59 61" w={3} color="#5A2C0C" />
    </>
  ),
  clipboard: (
    <>
      <rect x="6" y="6" width="60" height="65" rx="4" fill="#A57C44" />
      <rect x="6" y="64" width="60" height="7" rx="3" fill="#7A5527" />
      <rect x="10.500" y="13" width="51" height="51" fill="url(#paper)" />
      <path d="M15 21.500 H23 M15 26.500 H51 M15 29.500 H53 M15 32.500 H52 M15 35.500 H53 M15 38.500 H54 M15 41.500 H52 M15 44.500 H53 M15 47.500 H52 M15 50.500 H44 M15 56.500 H23 M15 59.500 H27" stroke="#C4C4C4" strokeWidth="1.300" />
      <path d="M16 12 Q16 8 20 8 H28 Q31 8 32 5 Q33 1 36 1 Q39 1 40 5 Q41 8 44 8 H52 Q56 8 56 12 V15 H16Z" fill="#B4B9C1" />
      <path d="M16 14 H56 V16 H16Z" fill="#6B6B6E" />
      <ellipse cx="36" cy="5" rx="1.600" ry="2.200" fill="#222222" />
    </>
  ),
  gear: (
    <>
      <g fill="url(#gearFill)">
        {[0, 30, 60, 90, 120, 150, 180, 210, 240, 270, 300, 330].map(a => (
          <path key={a} d="M29.500 14 L32.500 2.500 Q36 1 39.500 2.500 L42.500 14Z" fill="#B7BBC3" transform={`rotate(${a + 8} 36 36)`} />
        ))}
        <circle cx="36" cy="36" r="26.500" />
      </g>
      <circle cx="37" cy="36" r="20" fill="#777B82" />
      <circle cx="37" cy="36" r="22" fill="none" stroke="#6E7177" strokeWidth="1.500" />
      <circle cx="37" cy="36" r="17" fill="none" stroke="#8F949B" strokeWidth="2" />
      <circle cx="37" cy="36" r="12.500" fill="#C2C6CD" />
      <circle cx="37" cy="36" r="9" fill="#8B8F96" />
      <ellipse cx="37" cy="36.500" rx="5.500" ry="6.500" fill="#101113" />
      <path d="M27 30 Q31 24 39 24.500" fill="none" stroke="#F2F4F8" strokeWidth="2.500" strokeLinecap="round" />
    </>
  ),
};

function Emoji({ name, size = 72 }) {
  return (
    <EmojiSvg $size={size} viewBox={name === 'mic' ? '13 32 240 240' : '0 0 72 72'} aria-hidden="true">
      {emojis[name]}
    </EmojiSvg>
  )
}

function App() {
//data  ;
  const limit = 200;
  const chipArr = [
    { name: 'All' },
    { name: 'Funny', emoji: 'joy' },
    { name: 'Emotion', emoji: 'dizzy' },
    { name: 'Character', emoji: 'masks' },
    { name: 'Work', emoji: 'clipboard' },
  ];
  const toneArr = [
    { name: 'Drunk\nPerson', emoji: 'beer' },
    { name: "Can't Stop\nLaughing", emoji: 'rofl' },
    { name: 'Grandma\nNagging', emoji: 'grandma' },
    { name: 'Chatty\nGossip', emoji: 'chat' },
    { name: 'Angry\nBoss', emoji: 'angry' },
    { name: 'Santa\nClaus', emoji: 'santa' },
    { name: 'Sleepy\nPerson', emoji: 'sleepy' },
    { name: 'Gym\nTrainer', emoji: 'gym' },
    { name: 'Melodrama', emoji: 'crying' },
    { name: 'Horror\nWhisper', emoji: 'scream' },
    { name: 'Excited\nFan', emoji: 'excited' },
    { name: 'Tired\nWorker', emoji: 'tired' },
    { name: 'Touched\nFriend', emoji: 'touched' },
    { name: 'Dreamer', emoji: 'cloud' },
    { name: 'Villain', emoji: 'devil' },
    { name: 'Robot\nVoice', emoji: 'robot' },
  ];
  const tabArr = [
    { name: 'New Voice', emoji: 'mic' },
    { name: 'History', emoji: 'clipboard' },
    { name: 'Settings', emoji: 'gear' },
  ];

//;
  const [text, setText] = React.useState('Type anything. Make it funny.');
  const [chip, setChip] = React.useState('All');
  const [tone, setTone] = React.useState("Can't Stop\nLaughing");
  const [tab, setTab] = React.useState('New Voice');

//input field;
  function change(event){
    setText(event.target.value)
  }

  return (
    <Page>
      <Global></Global>
      <Defs></Defs>
      <StatusBar>
        <Time>7:58</Time>
        <StatusIcons>
          <svg width="51" height="38" viewBox="0 0 51 38" fill="#FFFFFF" aria-hidden="true">
            <rect x="0" y="24" width="9" height="12" rx="3" />
            <rect x="14" y="18" width="9" height="18" rx="3" />
            <rect x="28" y="10" width="9" height="26" rx="3" />
            <rect x="42" y="2" width="9" height="34" rx="3" fill="#333333" />
          </svg>
          <svg width="48" height="38" viewBox="0 0 48 38" fill="#FFFFFF" aria-hidden="true">
            <path d="M1 11 Q10 0.500 24 0.500 Q38 0.500 47 11 Q48.500 12 47 13 L44 15.500 Q43 16 42 15 Q35 8 24 8 Q13 8 6 15 Q5 16 4 15.500 L1 13 Q-0.500 12 1 11Z" />
            <path d="M9.500 19 Q15 12.500 24 12.500 Q33 12.500 38.500 19 Q39.500 20 38.500 21 L36 23.500 Q35 24.500 34 23.500 Q30 19.500 24 19.500 Q18 19.500 14 23.500 Q13 24.500 12 23.500 L9.500 21 Q8.500 20 9.500 19Z" />
            <path d="M17.500 27.500 Q20 25 24 25 Q28 25 30.500 27.500 Q31.500 28.500 30.500 29.500 L25 35 Q24 36 23 35 L17.500 29.500 Q16.500 28.500 17.500 27.500Z" />
          </svg>
          <Battery>
            <BatteryBody>96</BatteryBody>
            <BatteryTip></BatteryTip>
          </Battery>
        </StatusIcons>
      </StatusBar>

      <Main>
        <Title>What should I say? <Emoji name="mic" size={80} /></Title>
        <TextCard>
          <TextInput aria-label="What should I say?" maxLength={limit} spellCheck={false} value={text} onChange={change}></TextInput>
          <Counter><CounterValue>{text.length}</CounterValue> / {limit}</Counter>
        </TextCard>

        <SectionTitle>Choose Character Tone</SectionTitle>
        <Chips>
          {chipArr.map(item => (
            <Chip key={item.name} $active={chip === item.name} onClick={() => setChip(item.name)}>
              {item.emoji && <Emoji name={item.emoji} size={46} />}
              {item.name}
            </Chip>
          ))}
        </Chips>
        <Grid>
          {toneArr.map(item => (
            <Card key={item.name} $active={tone === item.name}>
              <CardSelect onClick={() => setTone(item.name)}>
                <Emoji name={item.emoji} />
                <CardLabel>{item.name}</CardLabel>
              </CardSelect>
              <PlayButton aria-label={'Play ' + item.name}>
                <svg width="18" height="20" viewBox="0 0 18 20" aria-hidden="true">
                  <path d="M1.500 2.500 V17.500 L16.500 10Z" fill="#F7B940" stroke="#F7B940" strokeWidth="3" strokeLinejoin="round" />
                </svg>
              </PlayButton>
            </Card>
          ))}
        </Grid>
      </Main>

      <TabBar>
        {tabArr.map(item => (
          <Tab key={item.name} $active={tab === item.name} onClick={() => setTab(item.name)}>
            <Emoji name={item.emoji} />
            {item.name}
          </Tab>
        ))}
      </TabBar>
    </Page>
  );
}

export default App;
